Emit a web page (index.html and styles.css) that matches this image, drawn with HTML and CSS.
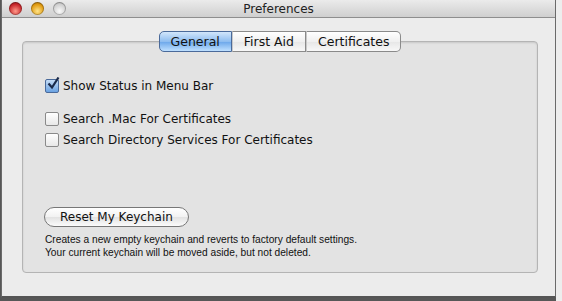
FILE: index.html
```html
<!DOCTYPE html>
<html lang="en">
<head>
  <meta charset="UTF-8" />
  <title>Preferences</title>
  <link rel="stylesheet" href="styles.css">
</head>
<body>
  <div class="window">
    <div class="titlebar">
      <div class="lights">
        <span class="light red"></span>
        <span class="light amber"></span>
        <span class="light grey"></span>
      </div>
      <div class="title">Preferences</div>
    </div>

    <div class="content">
      <div class="tabs">
        <span class="tab active">General</span>
        <span class="tab">First Aid</span>
        <span class="tab">Certificates</span>
      </div>

      <div class="group">
        <label class="check"><span class="box on">
          <svg width="14" height="14" viewBox="0 0 14 14"><path d="M2.5 6.5 L6 10.5 L12.5 0.5" fill="none" stroke="#1a2a4a" stroke-width="2.2"/></svg>
        </span>Show Status in Menu Bar</label>

        <div class="checks">
          <label class="check"><span class="box"></span>Search .Mac For Certificates</label>
          <label class="check"><span class="box"></span>Search Directory Services For Certificates</label>
        </div>

        <div class="reset">
          <button class="btn">Reset My Keychain</button>
          <p class="note">Creates a new empty keychain and reverts to factory default settings.<br>Your current keychain will be moved aside, but not deleted.</p>
        </div>
      </div>
    </div>
  </div>
</body>
</html>
```

FILE: styles.css
```css
body {
  margin: 0;
  font-family: 'DejaVu Sans', sans-serif;
  color: #111;
  width: 562px;
  height: 301px;
  overflow: hidden;
  background: linear-gradient(to right, #575757 556px, #ededed 556px);
}
.window {
  width: 553px;
  height: 296px;
  margin-left: 1px;
  background: #ececec;
  border: 1px solid #6a6a6a;
  border-top: none;
  border-bottom: 2px solid #555;
  box-sizing: content-box;
  position: relative;
}
.titlebar {
  height: 17px;
  background: linear-gradient(#ebebeb, #cfcfcf);
  border-bottom: 1px solid #8e8e8e;
  display: flex;
  align-items: center;
  position: relative;
}
.lights {
  display: flex;
  gap: 9px;
  padding-left: 7px;
}
.light {
  width: 13px;
  height: 13px;
  border-radius: 50%;
  box-shadow: inset 0 0 0 1px rgba(0,0,0,0.25);
}
.red { background: radial-gradient(circle at 50% 70%, #ff9a8a, #c8262a 60%, #7a1014); }
.amber { background: radial-gradient(circle at 50% 70%, #ffe48a, #e09a10 60%, #8a5a08); }
.grey { background: radial-gradient(circle at 50% 70%, #fafafa, #d0d0d0 60%, #9a9a9a); }
.title {
  position: absolute;
  left: 0; right: 0;
  text-align: center;
  font-size: 12px;
  color: #222;
}
.content {
  padding: 13px 17px 0 20px;
}
.tabs {
  display: flex;
  justify-content: center;
  position: relative;
  z-index: 1;
  height: 21px;
}
.tab {
  font-size: 12.5px;
  padding: 0 11px;
  height: 19px;
  line-height: 19px;
  background: linear-gradient(#ffffff, #f0f0f0 50%, #e6e6e6 51%, #f8f8f8);
  border: 1px solid #8a8a8a;
  border-left: 1px solid #c8c8c8;
}
.tab:first-child { border-radius: 5px 0 0 5px; border-left-color: #4a6a9a; }
.tab:last-child { border-radius: 0 5px 5px 0; }
.tab.active {
  background: linear-gradient(#d2e6fb, #8ebdf0 50%, #6aa6ea 51%, #bfe0ff);
  border-color: #4a6a9a;
}
.group {
  margin-top: -11px;
  height: 232px;
  background: #e3e3e3;
  border: 1px solid #b4b4b4;
  border-radius: 4px;
  box-shadow: inset 0 1px 2px rgba(0,0,0,0.12);
  padding: 33px 0 0 22px;
  box-sizing: border-box;
}
.check {
  display: flex;
  align-items: center;
  gap: 4px;
  font-size: 12px;
  height: 21px;
}
.box {
  width: 12px;
  height: 12px;
  border: 1px solid #8a8a8a;
  border-radius: 2px;
  background: linear-gradient(#ffffff, #e8e8e8);
  position: relative;
  flex: none;
}
.box.on {
  background: linear-gradient(#c4dcf6, #6aa2e2);
  border-color: #4a6a9a;
}
.box svg {
  position: absolute;
  left: 0;
  top: -3px;
}
.checks {
  margin-top: 12px;
}
.reset {
  margin-top: 56px;
}
.btn {
  font-family: inherit;
  font-size: 12px;
  color: #111;
  height: 20px;
  padding: 0 15px;
  margin-left: -1px;
  border: 1px solid #777;
  border-radius: 10px;
  background: linear-gradient(#ffffff, #f2f2f2 50%, #e2e2e2 51%, #fbfbfb);
}
.note {
  margin: 6px 0 0 0;
  font-family: 'Liberation Sans', sans-serif;
  font-size: 10.2px;
  line-height: 13px;
}
```
